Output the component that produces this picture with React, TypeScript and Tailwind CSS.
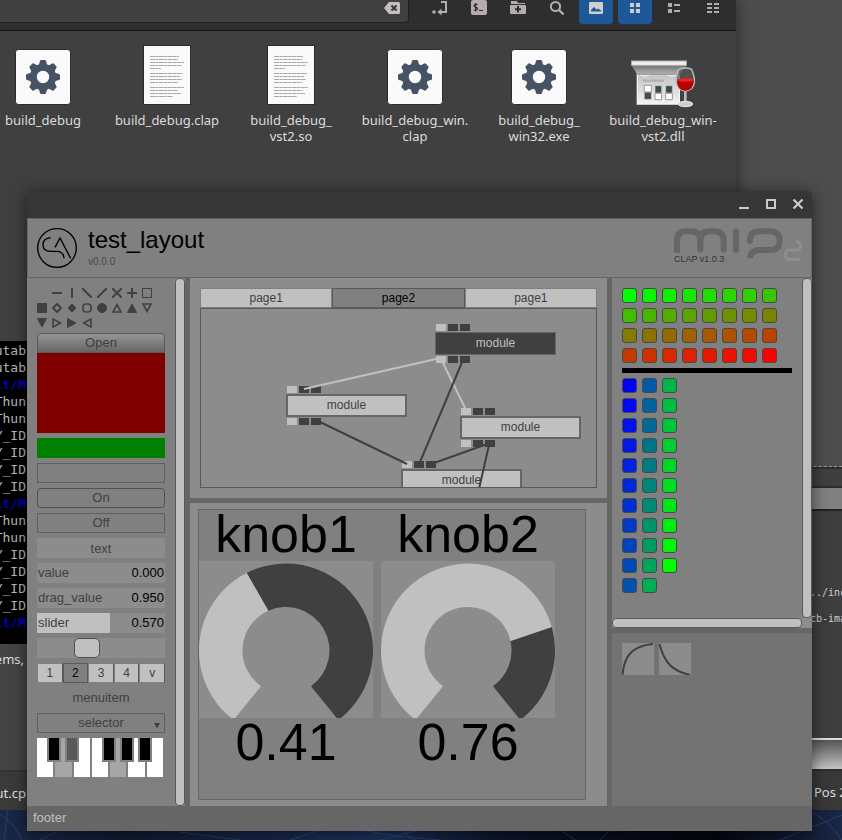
import React, { useState } from "react";
import type { ReactNode } from "react";

/* ---------- file manager ---------- */

function ToolButton({ label, active, children }: { label: string; active?: boolean; children: ReactNode }) {
  return (
    <button
      type="button"
      aria-label={label}
      className={
        active
          ? "flex h-6 w-[34px] items-start justify-center rounded-b-sm bg-[#1f5899] text-[#cfcfcf]"
          : "flex h-6 w-[34px] items-start justify-center rounded-b-sm text-[#b5adad]"
      }
    >
      <svg width="16" height="16" viewBox="0 0 16 16" fill="currentColor" aria-hidden="true">
        {children}
      </svg>
    </button>
  );
}

function Toolbar() {
  return (
    <div className="flex h-[31px] items-start justify-between border-b border-[#111] bg-[#2e2e2e] pr-[6px]">
      <div className="relative flex h-[23px] w-[409px] rounded-br-sm border-r border-b border-[#222] bg-[#404040]">
        <input aria-label="Location" className="min-w-0 flex-1 bg-transparent outline-none" />
        <button type="button" aria-label="Clear" className="mr-2 h-4 w-4">
          <svg width="16" height="16" viewBox="0 0 16 16" aria-hidden="true">
            <path d="M0 8 L5 2 H14.500 Q16 2 16 3.500 V12.500 Q16 14 14.500 14 H5 Z" fill="#c6bdbd" />
            <path d="M7.500 5.500 L12.500 10.500 M12.500 5.500 L7.500 10.500" stroke="#3c3c3c" strokeWidth="2.200" />
          </svg>
        </button>
      </div>
      <div className="flex gap-[5px]">
        <ToolButton label="Toggle location entry">
          <circle cx="2" cy="12" r="1.800" />
          <path d="M9 2 H14 V12 H9" fill="none" stroke="currentColor" strokeWidth="2" />
          <path d="M9.500 8.500 V15.500 L5.500 12 Z" />
        </ToolButton>
        <ToolButton label="Open in terminal">
          <rect x="0" y="0" width="16" height="15" rx="2" />
          <path d="M6.500 4.500 H4 Q3 4.500 3 5.800 Q3 7 4.500 7.200 Q6.500 7.500 6.500 8.800 Q6.500 10 5 10 H2.800 M4.700 3 V11.500 M8 10.500 H12" fill="none" stroke="#2e2e2e" strokeWidth="1.200" />
        </ToolButton>
        <ToolButton label="New folder">
          <path d="M1 1 H7 L8 3 H15 V4 H1 Z" />
          <rect x="0" y="5" width="16" height="9" rx="1" />
          <path d="M8 6 V12.500 M5 9.200 H11" stroke="#2e2e2e" strokeWidth="2" />
        </ToolButton>
        <ToolButton label="Search">
          <circle cx="6.500" cy="6.500" r="4.600" fill="none" stroke="currentColor" strokeWidth="2" />
          <path d="M10 10 L14.500 14.500" stroke="currentColor" strokeWidth="2.400" />
        </ToolButton>
        <ToolButton label="Show thumbnails" active>
          <rect x="1" y="2" width="14" height="12" rx="1" />
          <path d="M3 11.500 V10 L6 7 L8.500 9.500 L10 8.500 L13 10.500 V11.500 Z" fill="#1f5899" />
        </ToolButton>
        <ToolButton label="Icon view" active>
          <path d="M3 3 h4 v4 h-4 Z M9 3 h4 v4 h-4 Z M3 9 h4 v4 h-4 Z M9 9 h4 v4 h-4 Z" />
        </ToolButton>
        <ToolButton label="List view">
          <path d="M2 3 h4 v4 h-4 Z M2 9 h4 v4 h-4 Z M8 4 h6 v2 h-6 Z M8 10 h6 v2 h-6 Z" />
        </ToolButton>
        <ToolButton label="Compact view">
          <path d="M2 3 h5 v2 h-5 Z M2 7 h5 v2 h-5 Z M2 11 h5 v2 h-5 Z M9 3 h5 v2 h-5 Z M9 7 h5 v2 h-5 Z M9 11 h5 v2 h-5 Z" />
        </ToolButton>
      </div>
    </div>
  );
}

function GearIcon() {
  return (
    <svg width="56" height="56" viewBox="-28 -28 56 56" aria-hidden="true">
      <rect x="-27.500" y="-27.500" width="55" height="55" rx="3" fill="#fafafa" stroke="#2c2c2c" />
      {[0, 45, 90, 135, 180, 225, 270, 315].map((a) => (
        <path key={a} transform={`rotate(${a})`} d="M-4.500 -11 L-3 -16 Q-2.700 -17 -2 -17 H2 Q2.700 -17 3 -16 L4.500 -11 Z" fill="#465364" />
      ))}
      <circle r="9.700" fill="none" stroke="#465364" strokeWidth="7" />
    </svg>
  );
}

const docLines: [number, number][] = [
  [11, 29], [14, 28], [17, 34], [20, 32], [23, 11],
  [28, 33], [31, 30], [34, 32], [37, 28],
  [42, 34], [45, 28], [48, 31], [51, 23],
];

function DocIcon() {
  return (
    <svg width="48" height="60" viewBox="0 0 48 60" aria-hidden="true">
      <rect x="0.500" y="0.500" width="47" height="59" fill="#fafafa" stroke="#2c2c2c" />
      {docLines.map(([y, w]) => (
        <path key={y} d={`M7 ${y + 0.5} h${w}`} stroke="#a8a8a8" strokeWidth="1" strokeDasharray="5 .4 3 .4" />
      ))}
    </svg>
  );
}

function WineIcon() {
  return (
    <svg className="overflow-visible" width="66" height="45" viewBox="90 60 198 135" aria-hidden="true">
      <defs>
        <linearGradient id="awning" x1="0" y1="0" x2="0" y2="1">
          <stop offset="0" stopColor="#777" />
          <stop offset="1" stopColor="#b8b8b8" />
        </linearGradient>
        <linearGradient id="panel" x1="0" y1="0" x2="0" y2="1">
          <stop offset="0" stopColor="#c4c4c4" />
          <stop offset="1" stopColor="#f2f2f2" />
        </linearGradient>
      </defs>
      <path d="M96 78 H259 L238 104 H112 Z" fill="url(#awning)" />
      <path d="M112 104 H238 V192 H112 Z" fill="url(#panel)" stroke="#f4f4f4" strokeWidth="4" />
      <path d="M112 103 H238" stroke="#8a8a8a" strokeWidth="3" />
      <path d="M122 105 Q134 113 146 105 M204 105 Q216 113 228 105" stroke="#f4f4f4" fill="#ddd" strokeWidth="3" />
      <rect x="95" y="63" width="164" height="13" fill="#f0f0f0" stroke="#b4b4b4" strokeWidth="3" />
      <path d="M129 122 H192" stroke="#b2b2b2" strokeWidth="7" />
      <path d="M133 156 h21 v22 h-21 Z M165 137 h20 v22 h-20 Z M197 137 h20 v22 h-20 Z" fill="#3f4a4c" stroke="#ccc" strokeWidth="2" />
      <path d="M133 136 h21 v20 h-21 Z M165 160 h20 v19 h-20 Z M197 160 h20 v19 h-20 Z" fill="#fff" stroke="#999" strokeWidth="3" />
      <path d="M237 88 Q256 80 275 88 Q292 130 274 146 Q256 160 238 146 Q220 130 237 88 Z" fill="#555" fillOpacity=".75" stroke="#bdbdbd" strokeWidth="4" />
      <path d="M231 119 Q256 112 281 119 Q282 150 256 152 Q230 150 231 119 Z" fill="#b80000" />
      <ellipse cx="256" cy="120" rx="24" ry="5" fill="#ee2626" />
      <path d="M256 154 V190" stroke="#b9b9b9" strokeWidth="8" />
      <ellipse cx="256" cy="192" rx="22" ry="8" fill="#cfcfc6" stroke="#ededed" strokeWidth="3" />
    </svg>
  );
}

const files: { lines: string[]; kind: "gear" | "doc" | "wine" }[] = [
  { lines: ["build_debug"], kind: "gear" },
  { lines: ["build_debug.clap"], kind: "doc" },
  { lines: ["build_debug_", "vst2.so"], kind: "doc" },
  { lines: ["build_debug_win.", "clap"], kind: "gear" },
  { lines: ["build_debug_", "win32.exe"], kind: "gear" },
  { lines: ["build_debug_win-", "vst2.dll"], kind: "wine" },
];

function FileManager() {
  return (
    <section className="absolute top-0 right-[106px] left-0 h-[341px] overflow-hidden bg-[#404040] shadow-[0_0_14px_rgba(0,0,0,0.5)]">
      <Toolbar />
      <ul className="-ml-[19px] grid grid-cols-[repeat(6,124px)] pt-[14px]">
        {files.map((f, i) => (
          <li key={i} className="flex flex-col items-center">
            <div className="flex h-[60px] items-end justify-center">
              {f.kind === "gear" ? <GearIcon /> : f.kind === "doc" ? <DocIcon /> : <WineIcon />}
            </div>
            <div className="pt-[7px] text-center font-['Noto_Sans',sans-serif] text-[13px] leading-4 text-[#dcdcdc]">
              {f.lines.map((l) => (
                <div key={l}>{l}</div>
              ))}
            </div>
          </li>
        ))}
      </ul>
    </section>
  );
}

/* ---------- windows that peek out at the sides ---------- */

const termLines = [
  "utab", "utab", "lt/M", "Thun", "Thun", "Y_ID", "Y_ID", "Y_ID", "Y_ID",
  "lt/M", "Thun", "Thun", "Y_ID", "Y_ID", "Y_ID", "Y_ID", "lt/M",
];

function LeftWindows() {
  return (
    <section className="absolute top-[341px] bottom-[30px] left-0 flex w-[60px] flex-col bg-[#444]">
      <div className="h-[303px] bg-black pt-px font-['DejaVu_Sans_Mono',monospace] text-[13px] leading-[17px]">
        {termLines.map((t, i) => (
          <div key={i} className={t === "lt/M" ? "flex w-[26px] justify-end font-bold text-[#0000b4]" : "flex w-[26px] justify-end text-[#b8b8b8]"}>
            {t}
          </div>
        ))}
      </div>
      <div className="flex h-8 w-6 items-center justify-end font-['Noto_Sans',sans-serif] text-[13px] text-[#dcdcdc]">ems,</div>
      <div className="flex-1" />
      <div className="h-10 border-t-2 border-[#333] bg-[#3a3a3a] font-['Noto_Sans',sans-serif] text-[13px] leading-[42px] text-[#dcdcdc]">
        <div className="flex w-[26px] justify-end">ut.cp</div>
      </div>
    </section>
  );
}

function RightWindow() {
  return (
    <section className="absolute top-0 right-0 bottom-[30px] flex w-[120px] flex-col bg-[#4d4d4d]">
      <div className="h-[467px] border-b border-dashed border-[#999]" />
      <div className="h-[21px] border-y-2 border-[#2c2c2c] bg-[#3f3f3f]" />
      <div className="h-[23px] border-b-2 border-[#222] bg-[#808080]" />
      <div className="flex-1 bg-[#3e3e3e] pt-[69px] pl-[88px] font-['DejaVu_Sans_Mono',monospace] text-[10px] leading-[26px] whitespace-nowrap text-[#cfcfcf]">
        <div>../inc</div>
        <div>cb-ima</div>
      </div>
      <div className="h-[33px] border-t-2 border-b-2 border-t-[#ddd] border-b-[#2e2e2e] bg-linear-to-b from-[#555] to-[#c4c4c4]" />
      <div className="h-[39px] bg-[#383838] pl-[92px] font-['Noto_Sans',sans-serif] text-[13px] leading-[42px] whitespace-nowrap text-[#dcdcdc]">Pos 28</div>
    </section>
  );
}

function Wallpaper() {
  return (
    <svg className="absolute bottom-0 left-0 h-[30px] w-full" viewBox="0 0 842 30" preserveAspectRatio="none" aria-hidden="true">
      <defs>
        <linearGradient id="wall" x1="0" y1="0" x2="1" y2="0">
          <stop offset="0" stopColor="#1a2747" />
          <stop offset="0.150" stopColor="#111a30" />
          <stop offset="0.450" stopColor="#1b3058" />
          <stop offset="0.600" stopColor="#0d1428" />
          <stop offset="0.850" stopColor="#05060f" />
          <stop offset="1" stopColor="#1a2746" />
        </linearGradient>
      </defs>
      <rect width="842" height="30" fill="url(#wall)" />
      <path
        d="M0 4 Q14 12 22 30 M4 30 L8 0 M40 30 L60 20 M180 22 L240 30 M290 30 L320 20 M360 20 Q400 28 440 30 M380 30 L420 20 M400 20 L415 30 M560 20 L575 30 M610 20 L600 30 M780 30 L842 5 M812 2 Q832 14 842 30"
        fill="none"
        stroke="#3c5c94"
        strokeOpacity=".45"
      />
    </svg>
  );
}

/* ---------- plugin window ---------- */

function TitleBar() {
  return (
    <div className="flex h-[27px] items-start justify-end gap-[11px] rounded-t-sm bg-[#363636] pt-[5px] pr-[6px] text-[#c3cdd1]">
      <button type="button" aria-label="Minimize" className="h-4 w-4">
        <svg width="16" height="16" viewBox="0 0 16 16" aria-hidden="true"><path d="M3 12 H13" stroke="currentColor" strokeWidth="2" /></svg>
      </button>
      <button type="button" aria-label="Maximize" className="h-4 w-4">
        <svg width="16" height="16" viewBox="0 0 16 16" aria-hidden="true"><rect x="4" y="4" width="8" height="8" fill="none" stroke="currentColor" strokeWidth="2" /></svg>
      </button>
      <button type="button" aria-label="Close" className="h-4 w-4">
        <svg width="16" height="16" viewBox="0 0 16 16" aria-hidden="true"><path d="M3.500 3.500 L12.500 12.500 M12.500 3.500 L3.500 12.500" stroke="currentColor" strokeWidth="2.200" /></svg>
      </button>
    </div>
  );
}

function Header() {
  return (
    <header className="flex h-[60px] items-start justify-between border border-[#666] bg-[#808080] pt-[9px] pr-[7px] pl-[9px]">
      <div className="flex">
        <svg width="40" height="40" viewBox="51 129 120 120" fill="none" stroke="#000" strokeWidth="4" aria-hidden="true">
          <circle cx="111" cy="189" r="58" />
          <path d="M92 158 Q69 160 69 180 Q69 199 92 199 H113 Q131 201 132 220 M105 187 L120 159 L152 220" />
        </svg>
        <div className="pl-[11px]">
          <h1 className="text-[24px] leading-6 text-black">test_layout</h1>
          <p className="pt-1 text-[10px] leading-3 text-[#484848]">v0.0.0</p>
        </div>
      </div>
      <div className="relative">
        <svg width="130" height="34" viewBox="222 130 390 102" fill="none" stroke="#666" strokeWidth="18" aria-hidden="true">
          <path d="M231 204 V170 Q231 140 258 140 H274 Q301 140 301 170" />
          <path d="M301 195 V170 Q301 140 328 140 H344 Q371 140 371 170 V195" strokeLinecap="round" />
          <path d="M408 140 V196" strokeLinecap="round" />
          <path d="M450 168 Q450 140 478 140 H510 Q539 140 539 168 Q539 196 510 196 H478" strokeLinecap="round" />
          <path d="M482 196 Q450 196 450 221" />
          <path d="M588 169 Q602 173 602 184 Q602 196 589 196 H570 Q556 196 556 210 Q556 224 570 224 H600" stroke="#8f8f8f" strokeWidth="8" />
        </svg>
        <span className="absolute top-[25px] left-0 text-[9px] leading-3 whitespace-nowrap text-[#333]">CLAP v1.0.3</span>
      </div>
    </header>
  );
}

const symbols: ReactNode[] = [
  null,
  <path d="M0 5 H10" />,
  <path d="M5 0 V10" />,
  <path d="M0 0 L10 10" />,
  <path d="M0 10 L10 0" />,
  <path d="M0 0 L10 10 M0 10 L10 0" />,
  <path d="M0 5 H10 M5 0 V10" />,
  <rect x="0.500" y="0.500" width="9" height="9" strokeWidth="1" />,
  <rect x="0.500" y="0.500" width="9" height="9" fill="#404040" strokeWidth="1" />,
  <path d="M5 1 L9 5 L5 9 L1 5 Z" />,
  <path d="M5 1 L9 5 L5 9 L1 5 Z" fill="#404040" strokeWidth="1" />,
  <rect x="1" y="1" width="8" height="8" rx="3" strokeWidth="1.600" />,
  <circle cx="5" cy="5" r="4.500" fill="#404040" strokeWidth="1" />,
  <path d="M5 1.500 L9 9 H1 Z" strokeWidth="1.600" />,
  <path d="M5 1 L9.500 9.500 H0.500 Z" fill="#404040" strokeWidth="1" />,
  <path d="M5 8.500 L1 1 H9 Z" strokeWidth="1.600" />,
  <path d="M5 9 L0.500 0.500 H9.500 Z" fill="#404040" strokeWidth="1" />,
  <path d="M8.500 5 L1 9 V1 Z" strokeWidth="1.600" />,
  <path d="M9 5 L0.500 9.500 V0.500 Z" fill="#404040" strokeWidth="1" />,
  <path d="M1.500 5 L9 1 V9 Z" strokeWidth="1.600" />,
];

function ValueRow({ name, value, fill }: { name: string; value: string; fill?: number }) {
  return (
    <label className="relative flex h-5 items-center justify-between bg-[#8c8c8c] px-px">
      {fill !== undefined && <span className="absolute inset-y-0 left-0 bg-[#c0c0c0]" style={{ width: `${fill * 100}%` }} />}
      <span className="relative">{name}</span>
      <span className="relative text-black">{value}</span>
      <input type="range" min="0" max="1" step="0.001" defaultValue={value} className="absolute inset-0 h-full w-full opacity-0" />
    </label>
  );
}

const whiteKeys = [false, true, false, false, true, false, false];

function Keyboard() {
  return (
    <div className="relative flex h-[39px] w-[126px] gap-[2px]" role="group" aria-label="keyboard">
      {whiteKeys.map((down, i) => (
        <button key={i} type="button" aria-label={`white key ${i + 1}`} className={down ? "flex-1 bg-[#a6a6a6]" : "flex-1 bg-white"} />
      ))}
      <button type="button" aria-label="black key 1" className="absolute top-0 left-[10px] h-6 w-[14px] border-x-2 border-b-2 border-[#808080] bg-black" />
      <button type="button" aria-label="black key 2" className="absolute top-0 left-[28px] h-6 w-[14px] border-x-2 border-b-2 border-[#808080] bg-[#595959]" />
      <button type="button" aria-label="black key 3" className="absolute top-0 left-[65px] h-6 w-[14px] border-x-2 border-b-2 border-[#808080] bg-black" />
      <button type="button" aria-label="black key 4" className="absolute top-0 left-[83px] h-6 w-[14px] border-x-2 border-b-2 border-[#808080] bg-black" />
      <button type="button" aria-label="black key 5" className="absolute top-0 left-[101px] h-6 w-[14px] border-x-2 border-b-2 border-[#808080] bg-black" />
    </div>
  );
}

function ScrollBarV() {
  return (
    <div className="flex w-[10px] bg-[#808080]">
      <div className="flex-1 rounded-[4px] border border-[#595959] bg-[#c0c0c0]" />
    </div>
  );
}

function Sidebar() {
  const [choice, setChoice] = useState("2");
  return (
    <aside className="flex w-[158px] shrink-0 bg-[#808080]">
      <div className="flex flex-1 flex-col gap-[5px] pt-[10px] pr-[10px] pl-[10px] text-[13px] text-[#404040]">
        <div className="grid h-10 grid-cols-[repeat(8,10px)] gap-[5px]">
          {symbols.map((s, i) => (
            <svg key={i} width="10" height="10" viewBox="0 0 10 10" fill="none" stroke="#404040" strokeWidth="2" aria-hidden="true">
              {s}
            </svg>
          ))}
        </div>
        <div>
          <button type="button" className="block h-5 w-full rounded-t-[4px] border border-[#595959] bg-linear-to-b from-[#959595] to-[#666] leading-[18px]">Open</button>
          <div className="h-20 bg-[#800000]" />
        </div>
        <div className="h-5 bg-[#008000]" />
        <div className="h-5 border border-[#606060]" />
        <button type="button" className="h-5 rounded-[4px] border border-[#505050] leading-[18px]">On</button>
        <button type="button" className="h-5 border border-[#606060] leading-[18px]">Off</button>
        <input aria-label="text" defaultValue="text" className="h-5 w-full bg-[#8c8c8c] text-center outline-none" />
        <ValueRow name="value" value="0.000" />
        <ValueRow name="drag_value" value="0.950" />
        <ValueRow name="slider" value="0.570" fill={0.57} />
        <div className="flex h-5 bg-[#8c8c8c] pl-[37px]">
          <div className="w-[26px] rounded-[5px] border border-[#505050] bg-[#c0c0c0]" />
        </div>
        <div className="grid h-5 grid-cols-5 text-[12px]">
          {["1", "2", "3", "4", "v"].map((c) => (
            <button
              key={c}
              type="button"
              onClick={() => setChoice(c)}
              className={c === choice ? "border border-[#595959] bg-[#808080] text-black" : "border border-[#808080] border-r-[#595959] bg-[#c0c0c0]"}
            >
              {c}
            </button>
          ))}
        </div>
        <button type="button" className="h-5">menuitem</button>
        <div className="relative h-5">
          <select aria-label="selector" className="block h-5 w-full appearance-none border border-[#606060] bg-transparent leading-[18px] [text-align-last:center]">
            <option>selector</option>
          </select>
          <svg className="pointer-events-none absolute right-1 bottom-1" width="8" height="7" viewBox="0 0 8 7" aria-hidden="true">
            <path d="M1 1 H7 L4 6.500 Z" fill="#404040" />
          </svg>
        </div>
        <Keyboard />
      </div>
      <ScrollBarV />
    </aside>
  );
}

function Ports() {
  return (
    <div className="flex gap-[2px] pl-px">
      <span className="h-[7px] w-[10px] bg-[#c0c0c0]" />
      <span className="h-[7px] w-[10px] bg-[#404040]" />
      <span className="h-[7px] w-[10px] bg-[#404040]" />
    </div>
  );
}

const modules = [
  { x: 234, y: 15, selected: true },
  { x: 85, y: 77, selected: false },
  { x: 259, y: 99, selected: false },
  { x: 200, y: 152, selected: false },
];

function Graph() {
  return (
    <div className="relative h-[180px] overflow-hidden border border-[#595959]">
      {modules.map((m, i) => (
        <div key={i} className="absolute flex w-[121px] flex-col gap-px" style={{ left: m.x, top: m.y }}>
          <Ports />
          <div
            className={
              m.selected
                ? "h-[23px] border border-[#666] bg-[#404040] text-center text-[12px] leading-[21px] text-[#c0c0c0]"
                : "h-[23px] border-2 border-[#666] bg-[#c0c0c0] text-center text-[12px] leading-[19px] text-[#404040]"
            }
          >
            module
          </div>
          <Ports />
        </div>
      ))}
      <svg className="absolute top-0 left-0" width="395" height="178" viewBox="201 309 395 178" fill="none" strokeWidth="2" aria-hidden="true">
        <path d="M436 359 L304 389 M442 361 L466 410" stroke="#c0c0c0" />
        <path d="M463 360 L420 462 M320 422 L407 464 M490 443 L434 463 M489 445 L479 489" stroke="#404040" />
      </svg>
    </div>
  );
}

function polar(deg: number, r: number) {
  const a = (deg * Math.PI) / 180;
  return `${(87 + r * Math.sin(a)).toFixed(2)} ${(89.5 - r * Math.cos(a)).toFixed(2)}`;
}

/* a ring segment whose edges lean a little between outer and inner radius */
function ring(from: number, to: number, innerFrom: number, innerTo: number) {
  const large = to - from > 180 ? 1 : 0;
  return `M${polar(from, 87)} A87 87 0 ${large} 1 ${polar(to, 87)} L${polar(innerTo, 43.5)} A43.5 43.5 0 ${large} 0 ${polar(innerFrom, 43.5)} Z`;
}

function Knob({ name, value, shown }: { name: string; value: number; shown: string }) {
  const split = -143 + value * 286;
  return (
    <label className="relative block w-[174px] text-center text-[52px] leading-[48px] text-black">
      <span className="block h-[51px]">{name}</span>
      <svg className="block bg-[#8c8c8c]" width="174" height="157" viewBox="0 0 174 157" aria-hidden="true">
        <path d={ring(split, 143, split + 3, 145)} fill="#404040" />
        <path d={ring(-143, split, -145, split + 3)} fill="#c0c0c0" />
      </svg>
      <span className="block h-[53px]">{shown}</span>
      <input type="range" min="0" max="1" step="0.01" defaultValue={shown} className="absolute inset-0 h-full w-full opacity-0" />
    </label>
  );
}

function Center() {
  const [page, setPage] = useState(1);
  return (
    <main className="flex min-w-0 flex-1 flex-col gap-[5px]">
      <div className="h-[220px] bg-[#8c8c8c] p-[10px]">
        <div role="tablist" className="grid h-5 grid-cols-3 text-[12px]">
          {["page1", "page2", "page1"].map((p, i) => (
            <button
              key={i}
              type="button"
              role="tab"
              aria-selected={page === i}
              onClick={() => setPage(i)}
              className={page === i ? "border border-[#595959] bg-[#808080] leading-[17px] text-black" : "border border-[#808080] bg-[#c0c0c0] leading-[17px] text-[#404040]"}
            >
              {p}
            </button>
          ))}
        </div>
        <Graph />
      </div>
      <div className="flex-1 bg-[#8c8c8c] pt-[6px] pr-[21px] pb-[6px] pl-2">
        <div className="flex h-full gap-2 border border-[#666] bg-[#808080]">
          <Knob name="knob1" value={0.406} shown="0.41" />
          <Knob name="knob2" value={0.76} shown="0.76" />
        </div>
      </div>
    </main>
  );
}

const steps = Array.from({ length: 32 }, (_, i) => Math.round((i * 255) / 31));

function Swatch({ color }: { color: string }) {
  return <button type="button" aria-label={color} className="h-[15px] w-[15px] rounded-[3px] border border-[#484848]" style={{ backgroundColor: color }} />;
}

function RightColumn() {
  return (
    <aside className="flex w-[200px] shrink-0 flex-col gap-[5px]">
      <div className="h-[350px] bg-[#8c8c8c]">
        <div className="flex h-[340px] bg-[#808080]">
          <div className="flex flex-1 flex-col gap-[5px] p-[10px]">
            <div className="grid grid-cols-[repeat(8,15px)] gap-[5px]">
              {steps.map((s) => <Swatch key={s} color={`rgb(${s},${255 - s},0)`} />)}
            </div>
            <div className="h-[5px] bg-black" />
            <div className="grid grid-flow-col grid-cols-[repeat(3,15px)] grid-rows-[repeat(11,15px)] gap-[5px]">
              {steps.map((s) => <Swatch key={s} color={`rgb(0,${s},${255 - s})`} />)}
            </div>
          </div>
          <ScrollBarV />
        </div>
        <div className="mr-[10px] h-[10px] rounded-[4px] border border-[#595959] bg-[#c0c0c0]" />
      </div>
      <div className="flex flex-1 gap-[5px] bg-[#737373] p-[10px]">
        <svg className="bg-[#8c8c8c]" width="32" height="32" viewBox="0 0 32 32" fill="none" stroke="#404040" strokeWidth="2" aria-hidden="true">
          <path d="M0.500 32 C2 14 9 3 31 1" />
        </svg>
        <svg className="bg-[#8c8c8c]" width="32" height="32" viewBox="0 0 32 32" fill="none" stroke="#404040" strokeWidth="2" aria-hidden="true">
          <path d="M0.500 1 C5 19 13 28 31 32" />
        </svg>
      </div>
    </aside>
  );
}

export default function App() {
  return (
    <div className="relative h-screen min-h-[840px] w-full overflow-hidden bg-[#0b1020] font-['Liberation_Sans',Arial,sans-serif]">
      <Wallpaper />
      <RightWindow />
      <FileManager />
      <LeftWindows />
      <section className="absolute top-[191px] right-[30px] bottom-[9px] left-[27px] flex flex-col rounded-t-sm bg-[#666] shadow-[0_2px_16px_rgba(0,0,0,0.55)]">
        <TitleBar />
        <Header />
        <div className="flex min-h-0 flex-1 gap-[5px]">
          <Sidebar />
          <Center />
          <RightColumn />
        </div>
        <footer className="h-[25px] px-[6px] text-[13px] leading-[23px] text-[#c0c0c0]">footer</footer>
      </section>
    </div>
  );
}
